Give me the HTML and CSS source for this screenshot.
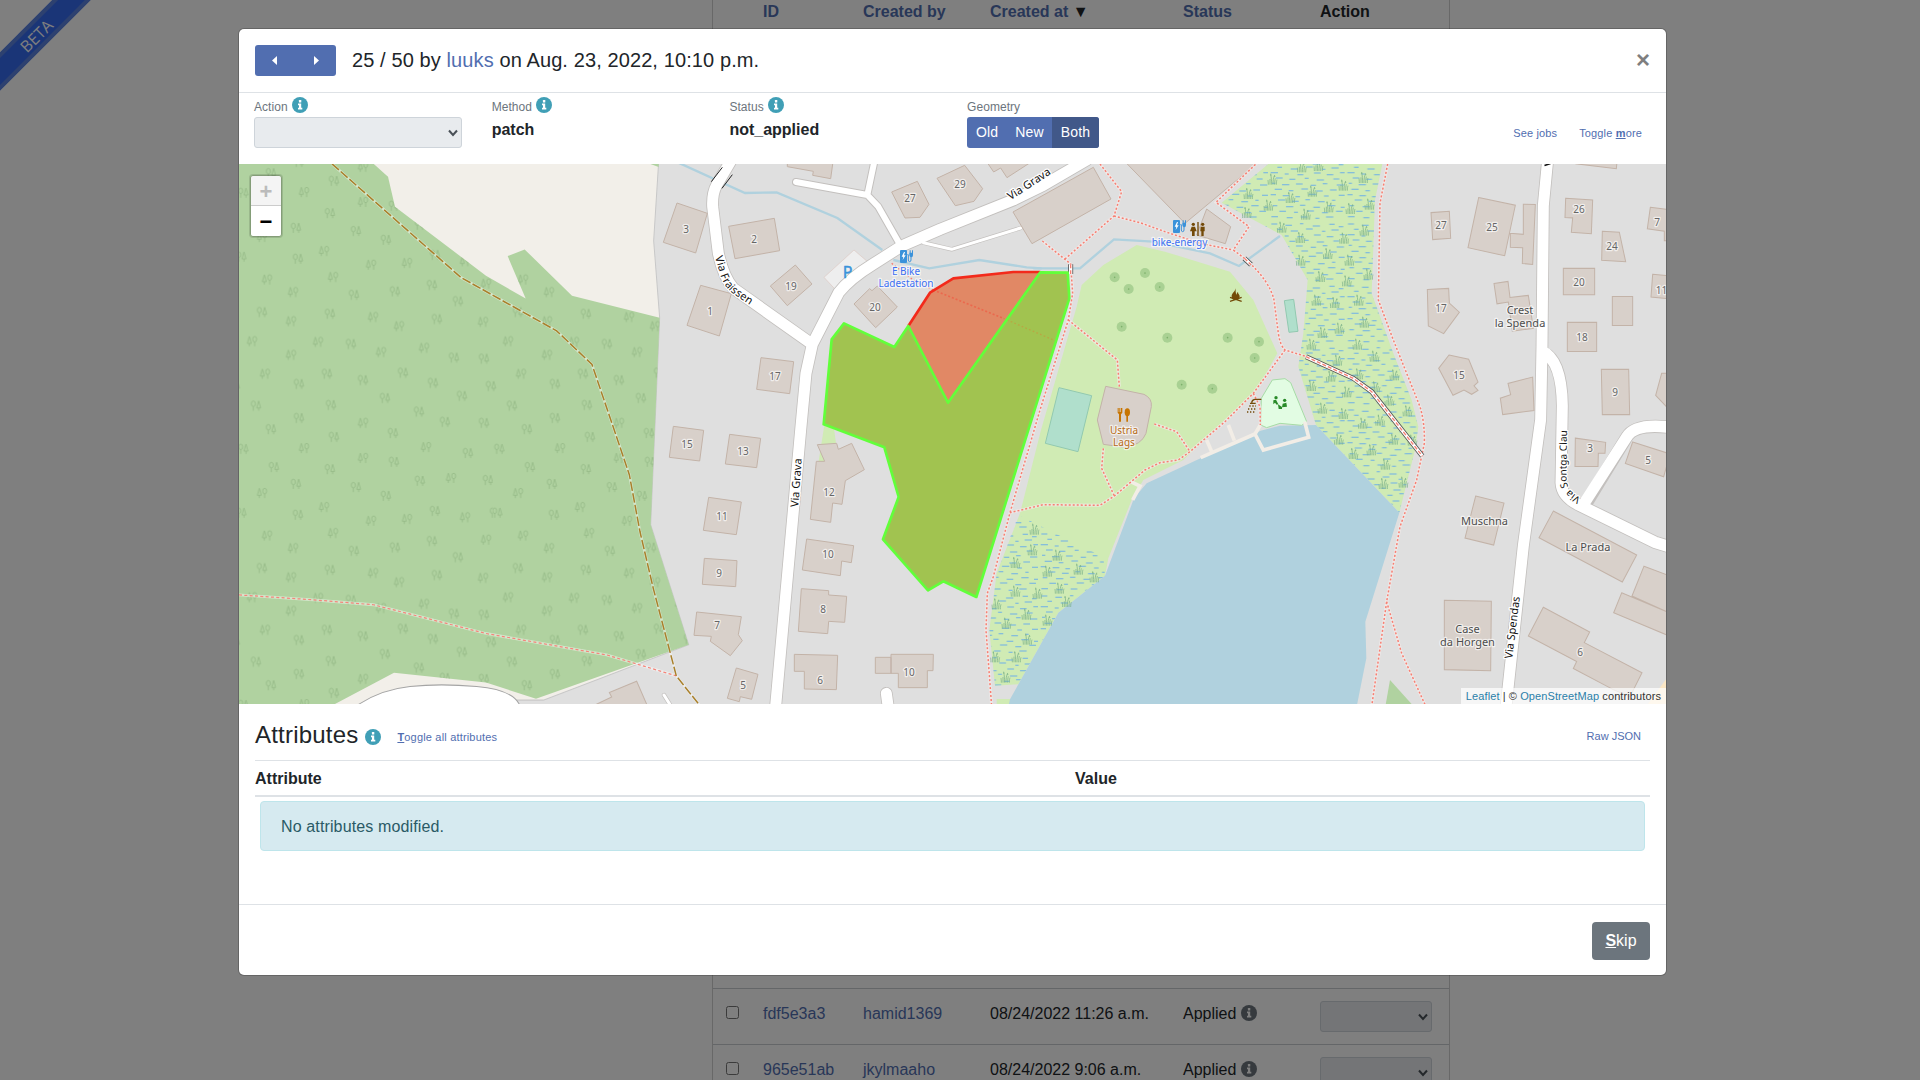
FILE: index.html
```html
<!DOCTYPE html>
<html lang="en">
<head>
<meta charset="utf-8">
<title>Suggestions</title>
<link rel="stylesheet" href="styles.css">
</head>
<body>
<svg class="defs" width="0" height="0"><defs>
<symbol id="info" viewBox="0 0 16 16"><circle cx="8" cy="8" r="8"/><g fill="#fff"><rect x="6.9" y="3" width="2.4" height="2.4" rx=".5"/><path d="M6 6.5h3.2v4.3h1.1v1.7H6v-1.7h1V8.2H6z"/></g></symbol>
</defs></svg>
<main class="page">
  <div class="list">
    <div class="row head"><span></span><a>ID</a><a>Created by</a><span><a>Created at</a> ▼</span><a>Status</a><span>Action</span></div>
    <div class="gap"></div>
    <div class="row"><input type="checkbox"><a>fdf5e3a3</a><a>hamid1369</a><span>08/24/2022 11:26 a.m.</span><span>Applied <svg class="info gray"><use href="#info"/></svg></span><div class="select"><svg viewBox="0 0 10 8"><path d="M1 1.5 5 6l4-4.5"/></svg></div></div>
    <div class="row"><input type="checkbox"><a>965e51ab</a><a>jkylmaaho</a><span>08/24/2022 9:06 a.m.</span><span>Applied <svg class="info gray"><use href="#info"/></svg></span><div class="select"><svg viewBox="0 0 10 8"><path d="M1 1.5 5 6l4-4.5"/></svg></div></div>
  </div>
</main>
<div class="ribbon"><span>BETA</span></div>
<div class="backdrop">
<section class="modal">
  <header class="top">
    <div class="nav"><svg width="5" height="9"><path d="M5 0v9L0 4.5z"/></svg><svg width="5" height="9"><path d="M0 0v9l5-4.500z"/></svg></div>
    <h5>25 / 50 by <a>luuks</a> on Aug. 23, 2022, 10:10 p.m.</h5>
    <b class="close">×</b>
  </header>
  <div class="meta">
    <div class="field"><label>Action <svg class="info"><use href="#info"/></svg></label><div class="select"><svg viewBox="0 0 10 8"><path d="M1 1.500 5 6l4-4.500"/></svg></div></div>
    <div class="field"><label>Method <svg class="info"><use href="#info"/></svg></label><b>patch</b></div>
    <div class="field"><label>Status <svg class="info"><use href="#info"/></svg></label><b>not_applied</b></div>
    <div class="field"><label>Geometry</label><div class="group"><span>Old</span><span>New</span><span class="on">Both</span></div></div>
    <div class="links"><a>See jobs</a><a>Toggle <u><b>m</b></u>ore</a></div>
  </div>
  <div class="map">
  <svg class="canvas" viewBox="239 164 1427 540">
  <defs>
    <g id="fir"><path d="M-8-13L-14 7H-2zM-8 7v8" /><ellipse cx="8" cy="-5" rx="6" ry="8"/><path d="M8 3v12"/></g>
    <g id="oak"><ellipse cx="-8" cy="-5" rx="6" ry="8"/><path d="M-8 3v12M8-13L2 7H14zM8 7v8"/></g>
    <pattern id="wood" patternUnits="userSpaceOnUse" x="20" y="313" width="768" height="730"><g transform="translate(-20 -313)" fill="none" stroke="#93b884" stroke-width="2.300">
    <use href="#fir" x="111" y="340"/><use href="#fir" x="309" y="333"/><use href="#fir" x="189" y="376"/><use href="#oak" x="372" y="384"/><use href="#oak" x="495" y="374"/><use href="#oak" x="606" y="356"/><use href="#oak" x="684" y="402"/><use href="#fir" x="768" y="352"/>
    <use href="#oak" x="96" y="433"/><use href="#fir" x="183" y="459"/><use href="#oak" x="300" y="438"/><use href="#fir" x="429" y="447"/><use href="#fir" x="507" y="473"/><use href="#oak" x="621" y="453"/><use href="#fir" x="759" y="461"/>
    <use href="#fir" x="66" y="516"/><use href="#fir" x="264" y="518"/><use href="#oak" x="363" y="524"/><use href="#fir" x="183" y="555"/><use href="#fir" x="453" y="547"/><use href="#fir" x="582" y="535"/><use href="#oak" x="672" y="563"/><use href="#oak" x="762" y="566"/>
    <use href="#fir" x="105" y="609"/><use href="#oak" x="291" y="609"/><use href="#oak" x="399" y="627"/><use href="#oak" x="207" y="638"/><use href="#oak" x="519" y="606"/><use href="#oak" x="609" y="635"/><use href="#oak" x="783" y="644"/><use href="#oak" x="15" y="644"/>
    <use href="#oak" x="465" y="678"/><use href="#oak" x="696" y="672"/><use href="#oak" x="78" y="700"/><use href="#oak" x="303" y="698"/><use href="#oak" x="207" y="735"/><use href="#oak" x="567" y="717"/><use href="#oak" x="645" y="746"/><use href="#fir" x="399" y="749"/><use href="#oak" x="762" y="749"/>
    <use href="#oak" x="123" y="767"/><use href="#oak" x="312" y="789"/><use href="#oak" x="489" y="778"/><use href="#fir" x="588" y="818"/><use href="#fir" x="222" y="821"/><use href="#oak" x="40" y="823"/><use href="#fir" x="399" y="849"/><use href="#oak" x="714" y="835"/>
    <use href="#oak" x="132" y="875"/><use href="#oak" x="300" y="881"/><use href="#oak" x="492" y="860"/><use href="#oak" x="198" y="923"/><use href="#oak" x="378" y="932"/><use href="#oak" x="570" y="914"/><use href="#fir" x="663" y="906"/><use href="#oak" x="774" y="912"/><use href="#fir" x="96" y="949"/><use href="#oak" x="468" y="957"/>
    <use href="#fir" x="282" y="989"/><use href="#oak" x="204" y="1011"/><use href="#oak" x="34" y="1005"/><use href="#oak" x="795" y="1005"/><use href="#oak" x="615" y="1000"/><use href="#fir" x="705" y="1018"/><use href="#fir" x="423" y="1028"/><use href="#fir" x="531" y="1023"/></g></pattern>
    <pattern id="wet" patternUnits="userSpaceOnUse" width="230" height="186"><path fill="none" stroke="#6db0e8" stroke-width="3" d="M4 6h18M46 10h20M90 5h10M128 12h22M178 7h16M206 14h14M22 22h14M62 27h22M108 21h20M156 28h10M184 24h22M2 38h22M44 42h12M82 44h18M132 39h20M170 44h20M210 38h14M18 54h20M58 58h18M104 55h12M140 60h22M190 57h18M6 70h10M36 74h22M78 72h20M122 76h16M158 71h14M200 75h22M14 88h22M56 92h14M94 87h20M138 93h20M180 90h20M2 104h16M38 107h20M76 110h14M116 103h22M162 108h14M206 106h18M24 120h22M66 124h20M106 119h14M144 125h20M186 121h10M8 137h14M48 140h22M90 136h16M130 142h20M174 137h22M212 142h12M28 154h20M72 157h12M110 153h22M156 158h18M198 154h20M4 170h20M50 173h18M92 171h20M136 175h12M168 171h22"/></pattern>
    <path id="reed" fill="none" stroke="#7db38a" stroke-width="2.300" d="M-12 17c0-8-1-12-1-14M-7 17V0M-2 17c0-12-1-20-3-33M2 17c0-12 1-20 5-29M7 17C7 8 8 3 9-2M12 17c0-8 1-12 2-15M-7-12h4M5-8h4"/>
    <g id="charge"><rect width="21" height="39" rx="3"/><path d="M22 14h3v16q0 5 4 5t4-5v-9" fill="none" stroke="#3a92da" stroke-width="3"/><path d="M28 8h11v8q0 6-5 6t-6-6zM29 1h3v8h-3zM36 1h3v8h-3z"/><path fill="#fff" d="M12 6 5 20h5l-2 10 9-14h-5l3-10z"/></g>
  </defs>
  <rect x="239" y="164" width="1427" height="540" fill="#dfdfdf"/>

  <!-- woodland to the west -->
  <g transform="translate(230 160) scale(.33333 .35074)">
    <path fill="#f2efe9" stroke="#c8c8c8" stroke-width="3" d="M20 5H1286L1271 230 1289 450 1262 1040 1376 1382 940 1540H850V1560H20z"/>
    <path fill="#b0d2a0" d="M20 5H424L474 48 495 133 768 330 887 395 833 274 884 255 1026 387 1289 450 1262 1040 1376 1382 918 1536 768 1490 492 1462 315 1551H20zM1260 11H1286V20z"/>
    <path fill="url(#wood)" d="M20 5H424L474 48 495 133 768 330 887 395 833 274 884 255 1026 387 1289 450 1262 1040 1376 1382 918 1536 768 1490 492 1462 315 1551H20z"/>
    <path fill="#fff" stroke="#a5a5a5" stroke-width="3" d="M380 1556Q450 1510 540 1501T740 1501 870 1556"/>
    <path class="bld" d="M1090 1556L1145 1531 1138 1518 1220 1486 1252 1556z"/>
    <g fill="none"><path stroke="#fff" stroke-opacity=".45" stroke-width="8" d="M27 1240L250 1254 430 1268 768 1350 1130 1411 1339 1471M306 11L693 335 980 487 1086 583 1198 897 1230 1060 1270 1222 1339 1471 1410 1556"/>
    <path stroke="#f5857a" stroke-width="3.500" stroke-dasharray="9 7" d="M27 1240L250 1254 430 1268 768 1350 1130 1411 1339 1471"/>
    <path stroke="#a9802b" stroke-width="4.500" stroke-dasharray="27 7" d="M306 11L693 335 980 487 1086 583 1198 897 1230 1060 1270 1222 1339 1471 1410 1556"/></g>
  </g>

  <!-- park, marsh and lake -->
  <g transform="translate(1040 160) scale(.33333)">
    <path fill="#d0ebb4" d="M290 255L375 275 570 335 640 420 712 580 645 700 500 830 430 900 310 960 275 1020 205 1195 195 1247 55 1358-65 1573-135 1577-152 1410-130 1240-60 1060 3 810 110 440 125 375 190 315zM685 12H1027L1005 120 995 400 1060 580 1115 720 1135 800 1125 870 1078 1058 828 795 775 620 790 520 803 360 725 225 545 128zM-130 1617H-80V1640H-130zM-632 700L-665 910-600 940z"/>
    <path fill="url(#wet)" d="M-65 1065L115 1155 190 1190 195 1247 55 1358-65 1573-135 1577-152 1410-130 1240zM685 12H1027L1005 120 995 400 1060 580 1115 720 1135 800 1125 870 1078 1058 828 795 775 620 790 520 803 360 725 225 545 128z"/>
    <path fill="#b0d1de" d="M-90 1618L55 1358 195 1247 282 1015 320 970 485 893 645 820 662 812 720 797 828 795 1078 1058 976 1385 979 1495 950 1640H-95z"/>
    <g><use href="#reed" x="697" y="57"/><use href="#reed" x="625" y="100"/><use href="#reed" x="817" y="93"/><use href="#reed" x="751" y="112"/><use href="#reed" x="910" y="75"/><use href="#reed" x="970" y="52"/><use href="#reed" x="785" y="20"/><use href="#reed" x="835" y="16"/><use href="#reed" x="685" y="135"/><use href="#reed" x="620" y="157"/><use href="#reed" x="797" y="162"/><use href="#reed" x="866" y="140"/><use href="#reed" x="931" y="145"/><use href="#reed" x="988" y="132"/><use href="#reed" x="725" y="201"/><use href="#reed" x="781" y="232"/><use href="#reed" x="912" y="234"/><use href="#reed" x="973" y="210"/><use href="#reed" x="863" y="280"/><use href="#reed" x="782" y="300"/><use href="#reed" x="928" y="300"/><use href="#reed" x="841" y="349"/><use href="#reed" x="985" y="342"/><use href="#reed" x="920" y="362"/><use href="#reed" x="829" y="420"/><use href="#reed" x="884" y="427"/><use href="#reed" x="956" y="420"/><use href="#reed" x="973" y="486"/><use href="#reed" x="898" y="504"/><use href="#reed" x="847" y="517"/><use href="#reed" x="814" y="552"/><use href="#reed" x="952" y="552"/><use href="#reed" x="892" y="600"/><use href="#reed" x="1003" y="588"/><use href="#reed" x="955" y="641"/><use href="#reed" x="872" y="648"/><use href="#reed" x="1063" y="644"/><use href="#reed" x="814" y="676"/><use href="#reed" x="1006" y="680"/><use href="#reed" x="920" y="695"/><use href="#reed" x="1048" y="720"/><use href="#reed" x="847" y="744"/><use href="#reed" x="910" y="760"/><use href="#reed" x="1102" y="752"/><use href="#reed" x="968" y="789"/><use href="#reed" x="1020" y="780"/><use href="#reed" x="896" y="837"/><use href="#reed" x="994" y="869"/><use href="#reed" x="940" y="880"/><use href="#reed" x="1117" y="840"/><use href="#reed" x="1060" y="837"/><use href="#reed" x="1036" y="912"/><use href="#reed" x="1030" y="970"/><use href="#reed" x="1090" y="966"/></g>
    <g transform="translate(-240 810)"><use href="#reed" x="223" y="297"/><use href="#reed" x="217" y="359"/><use href="#reed" x="292" y="375"/><use href="#reed" x="166" y="397"/><use href="#reed" x="262" y="423"/><use href="#reed" x="355" y="417"/><use href="#reed" x="403" y="440"/><use href="#reed" x="298" y="474"/><use href="#reed" x="166" y="483"/><use href="#reed" x="232" y="489"/><use href="#reed" x="320" y="514"/><use href="#reed" x="109" y="521"/><use href="#reed" x="199" y="552"/><use href="#reed" x="139" y="579"/><use href="#reed" x="262" y="570"/><use href="#reed" x="202" y="627"/><use href="#reed" x="105" y="680"/><use href="#reed" x="169" y="680"/><use href="#reed" x="136" y="741"/><path fill="#b0d2a0" d="M1290 750L1362 830H1276z"/></g>
    <g fill="#a9d193"><circle cx="224" cy="352" r="15"/><circle cx="315" cy="339" r="15"/><circle cx="266" cy="387" r="15"/><circle cx="359" cy="381" r="15"/><circle cx="245" cy="500" r="15"/><circle cx="382" cy="533" r="15"/><circle cx="563" cy="533" r="15"/><circle cx="657" cy="545" r="15"/><circle cx="644" cy="594" r="15"/><circle cx="425" cy="674" r="15"/><circle cx="517" cy="686" r="15"/></g>
    <path fill="none" stroke="#7db06b" stroke-width="5" stroke-linecap="round" d="M224 352h0M315 339h0M266 387h0M359 381h0M245 500h0M382 533h0M563 533h0M657 545h0M644 594h0M425 674h0M517 686h0"/>
    <path fill="#b0dfcc" stroke="#92c9b0" stroke-width="3" d="M57 683L155 707 114 875 16 850zM733 422L761 418 774 514 747 517z"/>
    <path fill="#e2fce3" stroke="#a6dca6" stroke-width="3" d="M697 660L735 656 752 668 800 785 785 796 720 790 680 803 662 795 664 715z"/>
    <path class="bld" d="M255 5L435 190 657 5zM500 147L572 200 556 251 470 225zM197 679L312 703Q337 715 334 740L318 820Q305 855 255 862L190 853 172 780z"/>
    <g fill="none"><path stroke="#f2ede6" stroke-width="11" d="M482 893L645 822 661 795M645 822L670 870 806 832 794 785M565 795L583 842M500 840L515 875M272 965L300 978 278 1020"/>
    <path stroke="#b0d1de" stroke-width="7" d="M-20 325H120L222 238 340 245 510 280 597 318 720 228"/>
    <path stroke="#f3ebe9" stroke-width="9" stroke-opacity=".7" d="M180 12L245 95 222 168 75 297M7 243L92 312 98 400 85 480 0 750-90 1058-140 1250-158 1300-162 1410-145 1640M222 168L300 188 375 215 480 250 580 270M655 5L528 127 627 200 580 270 620 300Q690 365 702 420L715 520Q720 555 735 570L800 590M735 570L640 700 555 785 450 875 415 900 360 908 315 930 223 1008 180 1036 10 1034-90 1058M85 480L232 600 238 680M190 865L185 925 223 1008M343 792L410 815 450 875M640 700L660 740 661 795M1043 12L1020 130 1015 420 1060 540 1140 740Q1155 790 1153 850L1130 960 1080 1100 1040 1325 995 1640M1040 1325L1085 1480 1158 1640"/>
    <path stroke="#f77f72" stroke-width="4.500" stroke-dasharray="6 6" d="M180 12L245 95 222 168 75 297M7 243L92 312 98 400 85 480 0 750-90 1058-140 1250-158 1300-162 1410-145 1640M222 168L300 188 375 215 480 250 580 270M655 5L528 127 627 200 580 270 620 300Q690 365 702 420L715 520Q720 555 735 570L800 590M735 570L640 700 555 785 450 875 415 900 360 908 315 930 223 1008 180 1036 10 1034-90 1058M85 480L232 600 238 680M190 865L185 925 223 1008M343 792L410 815 450 875M640 700L660 740 661 795M1043 12L1020 130 1015 420 1060 540 1140 740Q1155 790 1153 850L1130 960 1080 1100 1040 1325 995 1640M1040 1325L1085 1480 1158 1640"/>
    <path stroke="#555" stroke-width="15" d="M798 590L940 655 995 695 1147 888M92 313V342M613 295L633 314"/><path stroke="#fff" stroke-width="10" d="M798 590L940 655 995 695 1147 888M92 313V342M613 295L633 314"/><path stroke="#f77f72" stroke-width="4" stroke-dasharray="12 6" d="M798 590L940 655 995 695 1147 888M92 313V342M613 295L633 314"/></g>
    <g fill="#3a92da"><use href="#charge" x="399" y="180"/></g>
    <g fill="#734a08"><circle cx="460" cy="193" r="5"/><path d="M455 200h10l5 14h-6v14h-8v-14h-6zM472 186h4v42h-4zM482 200h12v14h-3v14h-7v-14h-3z"/><circle cx="488" cy="193" r="5"/><path d="M587 385c-2 12-13 14-12 26 1 8 8 9 12 9s12-2 12-11c0-6-5-6-5-13-3 2-4 5-4 9-4-7-3-13-3-20z"/></g>
    <g fill="none" stroke="#734a08"><path stroke-width="3.500" d="M570 412l35 12M605 412l-35 12"/><path stroke-width="4" d="M664 718h-20q-8 2-9 10M630 730h17"/><path stroke-width="5" stroke-dasharray="4 5" d="M628 738h20M624 747h22M621 756h26"/></g>
    <g fill="#298a29"><circle cx="708" cy="713" r="5"/><circle cx="734" cy="721" r="5"/><path d="M700 721l8-2 7 14-5 1-5-6-5 5zM728 731l11-3 2 12-15 2zM714 733l12 8v6h-10z"/></g>
    <g fill="#c77400"><path d="M233 744h3v12h2v-12h3v12h2v-12h4v14l-4 5v22h-6v-22l-4-5z"/><ellipse cx="262" cy="757" rx="8" ry="12"/><path d="M259 764h5v21h-5z"/></g>
  </g>

  <!-- village streets and houses -->
  <g transform="translate(660 160) scale(.33333)">
    <path fill="none" stroke="#b0d1de" stroke-width="7" d="M55 8L255 99 350 97 532 174 667 270M700 300L808 325 958 300 1100 322 1145 325"/>
    <path fill="#eee" stroke="#dcc9c2" stroke-width="2" d="M582 270L640 320 530 393 492 352z"/>
    <path fill="none" stroke="#f77f72" stroke-width="4" stroke-dasharray="5 7" d="M695 310L760 360 820 390"/>
    <g fill="none" stroke-linecap="round" stroke-linejoin="round"><g stroke="#c3c0be">
      <path stroke-width="38" d="M345 1660L422 810 438 640 457 553 536 398Q570 355 640 312L725 258 840 208 1060 120 1150 76 1280 0M214 0L170 75Q156 100 158 140L175 280Q190 350 220 385L457 553M679 1600L686 1650"/><path stroke-width="24" d="M408 66L622 105 655 140 715 245M644 0L622 105"/><path stroke-width="13" d="M790 248L875 268 1082 204M12 1605L40 1650"/></g>
      <g stroke="#fff"><path stroke-width="33" d="M345 1660L422 810 438 640 457 553 536 398Q570 355 640 312L725 258 840 208 1060 120 1150 76 1280 0M214 0L170 75Q156 100 158 140L175 280Q190 350 220 385L457 553M679 1600L686 1650"/><path stroke-width="18" d="M408 66L622 105 655 140 715 245M644 0L622 105"/><path stroke-width="9" d="M790 248L875 268 1082 204M12 1605L40 1650"/></g></g>
    <path fill="none" stroke="#222" stroke-width="3" d="M154 65L187 22M186 85L217 44"/>
    <path class="bld" d="M51 129L142 160 107 279 10 247zM206 199L343 175 359 272 225 296zM406 315L456 372 382 437 331 378zM122 376L214 401 178 528 81 496zM303 593L401 605 389 701 290 688zM652 378L712 441 647 503 582 432 629 386 636 392zM772 64L807 133 780 172 735 174 695 96zM914 16L968 86 942 124 886 137 831 55zM382 5V20L460 34 458 46 512 56 519 5zM980 5L1001 36 1022 24 1041 53 1115 5zM1300 22L1353 117 1116 251 1059 156z"/>
    <g transform="translate(0 810)"><path class="bld" d="M40-11L131 1 119 93 28 82zM209 13L302 25 290 113 196 102zM146 202L244 216 229 314 130 301zM133 385L231 392 227 470 127 463zM110 546L244 560 235 614 247 632 211 677 151 634 154 619 102 616zM229 714L294 733 275 808 241 800 238 815 202 805zM472 44L530 40 535 58 575 40 613 119 556 152 546 223 518 219 512 277 451 268 469 94 494 94zM440 327L581 347 574 398 545 393 541 437 427 420zM424 476L506 482V495L560 499 554 577 506 574 503 611 415 604zM403 673L533 676 529 779 433 777V724H403zM693 673H820L819 722H802V773H715V730H693zM646 682H693V730H646z"/></g>
    <path fill="#e18865" d="M745 498L810 398 880 355 1060 336 1141 337 864 728z"/>
    <path fill="#a1c350" d="M745 498L864 728 1141 337 1223 338 1228 415 949 1311 850 1264 804 1291 669 1138 716 1011 673 862 491 793 515 538 552 490 703 561z"/>
    <path fill="none" stroke="#f2543e" stroke-opacity=".6" stroke-width="5" stroke-dasharray="6 6" d="M820 390L1030 475"/><path fill="none" stroke="#c59a3d" stroke-opacity=".7" stroke-width="4" stroke-dasharray="5 7" d="M1030 475L1185 542"/>
    <g fill="none" stroke-width="8" stroke-linejoin="round"><path stroke="#f32a1b" d="M745 498L810 398 880 355 1060 336H1141"/><path stroke="#62ff3a" d="M745 498L864 728 1141 337 1223 338 1228 415 949 1311 850 1264 804 1291 669 1138 716 1011 673 862 491 793 515 538 552 490 703 561z"/></g>
    <g fill="#3a92da"><use href="#charge" x="720" y="270"/></g>
  </g>
  <g transform="translate(1380 160) scale(.33333 .35074)">
    <path fill="#fbe7c5" d="M800 1556L870 1465V1556z"/>
    <g fill="none"><path stroke="#c3c0be" stroke-width="38" d="M503 0L490 130 486 530 482 740 430 1100 378 1560M490 550Q545 570 547 700L543 920Q545 960 600 985L825 1090 870 1103M615 985L740 790Q765 750 870 762"/><path stroke="#fff" stroke-width="33" d="M503 0L490 130 486 530 482 740 430 1100 378 1560M486 545Q545 570 547 700L543 920Q545 960 600 985L825 1090 870 1103M605 990L740 790Q765 750 870 762"/></g>
    <path class="bld" d="M153 150L208 146 212 223 158 227zM296 107L406 129 374 273 264 250zM430 126L466 127 458 298 427 295 428 250 391 249V209L430 212zM142 369L206 366 208 408 238 434 191 495 145 473zM342 352L384 346 390 392 445 386 460 480 397 488 385 405 351 410zM207 556L266 568 294 633 282 644 294 657 275 668 252 656 219 671 176 594zM458 619L462 714 368 726 361 679 392 669 384 637zM557 109L638 114 634 210 574 206 578 165 555 164zM667 203L718 206 737 290 665 286zM550 309H644V384H550zM818 326L870 330V396L813 391zM811 135L870 142V230H853V203L802 196zM697 389H758V472H697zM562 463H650V546H562zM664 597H746L749 726H667zM845 608H870V714L827 671zM586 793L677 805 675 836 655 836 654 874 585 874zM758 804L870 838 851 903 736 865zM520 1001L770 1126 727 1203 477 1077zM792 1158L870 1186V1292L756 1243zM725 1234L870 1292V1358L701 1291zM287 958L372 978 341 1098 255 1078zM193 1255L334 1258 332 1456 193 1453zM490 1275L629 1346 613 1376 786 1462 750 1530 700 1510 580 1450 590 1430 445 1357zM600 5H711L709 25 590 11z"/>
  </g>

  <g class="num">
    <text x="686" y="232.500">3</text><text x="754" y="242.500">2</text><text x="791" y="289.500">19</text><text x="710" y="314.500">1</text><text x="775" y="379.500">17</text><text x="875" y="310.500">20</text><text x="910" y="202">27</text><text x="960" y="187.500">29</text>
    <text x="687" y="448">15</text><text x="743" y="455">13</text><text x="722" y="520">11</text><text x="719" y="577">9</text><text x="717" y="629">7</text><text x="743" y="689">5</text><text x="829" y="496">12</text><text x="828" y="557.500">10</text><text x="823" y="613">8</text><text x="820" y="684">6</text><text x="909" y="676">10</text>
    <text x="1441" y="229">27</text><text x="1492" y="231">25</text><text x="1441" y="312">17</text><text x="1459" y="379">15</text><text x="1579" y="213">26</text><text x="1612" y="250">24</text><text x="1579" y="285.500">20</text><text x="1657" y="226">7</text><text x="1661.500" y="294">11</text><text x="1582" y="341">18</text><text x="1615" y="396">9</text><text x="1590" y="452">3</text><text x="1648" y="464">5</text><text x="1580" y="656">6</text>
  </g>
  <g class="place"><text x="1520" y="313.500">Crest</text><text x="1520" y="326.500">la Spenda</text><text x="1484.500" y="524.500">Muschna</text><text x="1588" y="551">La Prada</text><text x="1467.500" y="633">Case</text><text x="1467.500" y="646">da Horgen</text></g>
  <g class="poi"><text x="906" y="275">E Bike</text><text x="906" y="287">Ladestation</text><text x="1179.500" y="245.500">bike-energy</text></g>
  <g class="food"><text x="1124" y="434">Ustria</text><text x="1124" y="446">Lags</text></g>
  <text class="park" x="847.500" y="278">P</text>
  <g class="street">
    <text transform="translate(1031 187) rotate(-33)" text-anchor="middle">Via Grava</text>
    <text transform="translate(800 483) rotate(-86)" text-anchor="middle">Via Grava</text>
    <text transform="translate(1516 628) rotate(-83)" text-anchor="middle">Via Spendas</text>
    <path id="fr" fill="none" d="M715 257L721 277Q725 288 735 295L765 315"/><text><textPath href="#fr" textLength="62">Via Fraissen</textPath></text>
    <path id="sc" fill="none" d="M1581 498Q1567 491 1566.500 480L1567 425"/><text class="small"><textPath href="#sc" textLength="74">Via Sontga Clau</textPath></text>
    <path fill="none" stroke="#111" stroke-width="1.500" d="M1544.500 165.500l6-2"/>
  </g>
  </svg>
  <div class="zoom"><span class="off">+</span><span>−</span></div>
  <div class="credit"><a>Leaflet</a> | © <a>OpenStreetMap</a> contributors</div>
  </div>
  <div class="attrs">
    <div class="attrs-head"><h4>Attributes</h4><svg class="info"><use href="#info"/></svg><a><u><b>T</b></u>oggle all attributes</a><a class="raw">Raw JSON</a></div>
    <div class="cols"><b>Attribute</b><b>Value</b></div>
    <div class="alert">No attributes modified.</div>
  </div>
  <footer><button><u><b>S</b></u>kip</button></footer>
</section>
</div>
</body>
</html>
```
FILE: styles.css
```css
*{box-sizing:border-box}
body{margin:0;height:1080px;overflow:hidden;background:#fff;font:16px/24px "Liberation Sans",Arial,sans-serif;color:#212529;position:relative}
a{color:#516eb0}
h4,h5{margin:0;font-weight:400}
.defs{position:absolute}
.info{width:16px;height:16px;fill:#409fb6}
.info.gray{fill:#6c757d;vertical-align:-2px}
.page{display:flex;justify-content:center;padding-left:242px}
.list{width:738px;height:1080px;border:1px solid #d0d0d0;border-width:0 1px;overflow:hidden}
.row{display:grid;grid-template-columns:37px 100px 127px 193px 137px 112px;padding:12px 0 0 13px;height:56px;border-top:1px solid #c9ccd0;align-items:start}
.row.head{height:30px;padding-top:0;border:0;font-weight:700;line-height:23px}
.gap{height:958px}
.row input{margin:5px 0 0;width:13px;height:13px}
.row>a,.row>span{padding-top:1px}
.row.head>*{padding-top:0}
.select{display:flex;align-items:center;justify-content:flex-end;height:31px;background:#e8ebee;border:1px solid #ced4da;border-radius:3px;padding-right:3px}
.select svg{width:10px;height:8px;fill:none;stroke:#495057;stroke-width:2}
.ribbon{position:absolute;left:-64px;top:22px;width:200px;height:27px;transform:rotate(-45deg);background:#346aee;border:4px solid #5b83e0;color:#fff;display:flex;align-items:center;justify-content:center;font:16px "Open Sans",sans-serif}
.backdrop{position:absolute;inset:0;background:rgba(0,0,0,.5);padding:29px 254px 0 239px}
.modal{width:1427px;height:946px;background:#fff;border-radius:5px;box-shadow:0 0 0 1px rgba(0,0,0,.2);display:flex;flex-direction:column}
.top{height:64px;border-bottom:1px solid #dee2e6;display:flex;align-items:center;padding:0 16px 0 16px;flex:none}
.nav{width:81px;height:31px;background:#516eb0;border-radius:3px;display:flex;justify-content:space-between;padding:0 17px;align-items:center}
.nav svg{fill:#fff}
h5{font-size:20px;margin:-2px 0 0 16px;letter-spacing:.105px}
.close{margin:-2px 0 0 auto;font-size:24px;color:#7f7f7f;width:14px}
.meta{display:flex;height:71px;padding-left:15px;flex:none}
.field{width:237.700px}
.field label{display:flex;gap:4px;height:24px;padding-top:3px;font-size:12px;line-height:23px;color:#6c757d;letter-spacing:.05px}
.field label .info{margin-top:1px}
.field>b{display:block;margin-top:1px}
.field .select{width:208px}
.group{display:inline-flex;height:31px;border-radius:3px;background:#516eb0;color:#fff;font-size:14px;letter-spacing:.15px;line-height:31px;overflow:hidden}
.group span{padding:0 9px}
.group span:nth-child(2){padding:0 8px}
.group .on{background:#415889;padding:0 9px}
.links{margin-left:auto;padding:28px 24px 0 0;display:flex;gap:22px;font-size:11px;letter-spacing:.15px}
.map{position:relative;height:540px;flex:none}
.canvas{display:block;width:1427px;height:540px}
.bld{fill:#d8d0ca;stroke:#c3b3a8;stroke-width:3}
.canvas text{font-family:"Noto Sans",sans-serif;paint-order:stroke;stroke:rgba(255,255,255,.65);stroke-width:2.500px;stroke-linejoin:round}
.num text,.place text,.poi text,.food text,.park{text-anchor:middle}
.num text{font-size:10px;fill:#666}
.place text{font-size:11px;fill:#4d4d4d}
.poi text{font-size:10px;fill:#3d70f2}
.food text{font-size:10px;fill:#b66b15}
.street text{font-size:11px;fill:#111;stroke:#fff}
.street .small{font-size:10px}
.canvas .park{font-size:16px;fill:#3a92da;stroke:#3a92da;stroke-width:.4px}
.zoom{position:absolute;left:11px;top:11px;width:32px;border:1px solid rgba(0,0,0,.25);box-shadow:0 0 0 1px rgba(0,0,0,.12);border-radius:3px;overflow:hidden;font:700 22px/31px "Liberation Sans",sans-serif;color:#000;text-align:center}
.zoom span{display:block;height:30px;background:#fff}
.zoom .off{background:#f4f4f4;color:#bbb;border-bottom:1px solid #ccc}
.credit{position:absolute;right:0;bottom:0;height:16px;padding:0 5px;background:rgba(255,255,255,.7);font-size:11px;letter-spacing:.1px;line-height:16px;color:#333}
.credit a{color:#2a80a9}
.attrs{padding:0 16px;height:201px;flex:none;border-bottom:1px solid #dee2e6}
.attrs-head{height:56px;display:flex;align-items:center;font-size:11px;padding:6px 9px 0 0;letter-spacing:.18px}
.attrs-head h4{font-size:24px;letter-spacing:.2px}
.attrs-head .info{margin:4px 16px 0 7px}
.attrs-head a{padding-top:4px}
.attrs-head .raw{margin-left:auto;padding-top:1px;letter-spacing:0}
.cols{display:grid;grid-template-columns:820px 1fr;height:37px;border-top:1px solid #dee2e6;border-bottom:2px solid #dee2e6;line-height:36px}
.alert{margin:4px 5px 0;height:50px;background:#d6eaf0;border:1px solid #bee5eb;border-radius:4px;padding:0 20px;line-height:49px;color:#2a5a66;letter-spacing:.13px}
footer{display:flex;justify-content:flex-end;padding:17px 16px}
footer button{width:58px;height:38px;border:0;border-radius:4px;background:#6c757d;color:#fff;font:16px "Liberation Sans",sans-serif;padding:0}
```
